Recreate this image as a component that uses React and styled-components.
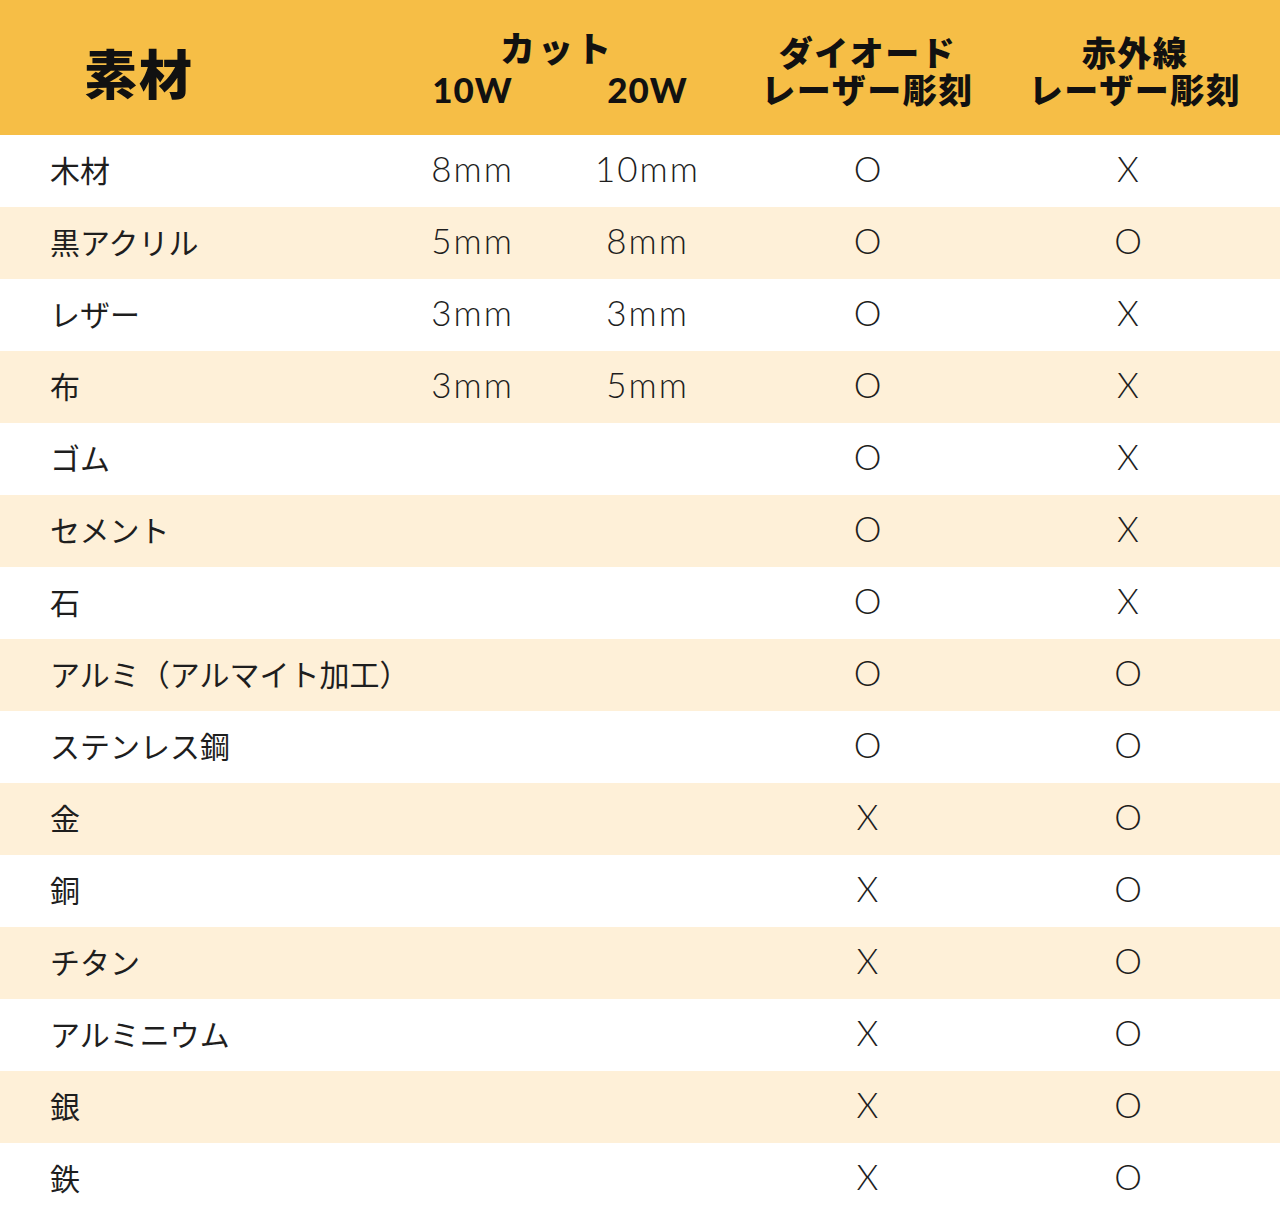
import React from 'react'
import styled, { createGlobalStyle } from 'styled-components'

const rows = [
  { name: '木材', w10: '8mm', w20: '10mm', diode: 'O', ir: 'X' },
  { name: '黒アクリル', w10: '5mm', w20: '8mm', diode: 'O', ir: 'O' },
  { name: 'レザー', w10: '3mm', w20: '3mm', diode: 'O', ir: 'X' },
  { name: '布', w10: '3mm', w20: '5mm', diode: 'O', ir: 'X' },
  { name: 'ゴム', diode: 'O', ir: 'X' },
  { name: 'セメント', diode: 'O', ir: 'X' },
  { name: '石', diode: 'O', ir: 'X' },
  { name: 'アルミ（アルマイト加工）', diode: 'O', ir: 'O' },
  { name: 'ステンレス鋼', diode: 'O', ir: 'O' },
  { name: '金', diode: 'X', ir: 'O' },
  { name: '銅', diode: 'X', ir: 'O' },
  { name: 'チタン', diode: 'X', ir: 'O' },
  { name: 'アルミニウム', diode: 'X', ir: 'O' },
  { name: '銀', diode: 'X', ir: 'O' },
  { name: '鉄', diode: 'X', ir: 'O' }
]

export default function App () {
  return (
    <>
      <GlobalStyle />
      <Table>
        <Header>
          <MaterialHead>素材</MaterialHead>
          <CutHead>
            <CutTitle>カット</CutTitle>
            <Watts>
              <Watt>10W</Watt>
              <Watt>20W</Watt>
            </Watts>
          </CutHead>
          <EngraveHead>ダイオード<br />レーザー彫刻</EngraveHead>
          <EngraveHead $shift={7}>赤外線<br />レーザー彫刻</EngraveHead>
        </Header>
        {rows.map((row, i) => (
          <Row key={row.name} $alt={i % 2 === 1}>
            <Name>{row.name}</Name>
            <Value>{row.w10}</Value>
            <Value>{row.w20}</Value>
            <Mark>{row.diode}</Mark>
            <Mark>{row.ir}</Mark>
          </Row>
        ))}
      </Table>
    </>
  )
}

const GlobalStyle = createGlobalStyle`
  body {
    margin: 0;
    background: #fff;
    font-family: "Noto Sans CJK JP", sans-serif;
    color: #1a1a1a;
  }
`

const columns = '385px 175px 175px 265px 256px'

const Table = styled.div`
  width: 1280px;
`

const Header = styled.div`
  display: grid;
  grid-template-columns: 385px 350px 265px 256px;
  height: 135px;
  background: #f6be46;
  color: #111;
  align-items: center;
`

const MaterialHead = styled.div`
  padding-left: 84px;
  padding-top: 8px;
  font-size: 53px;
  font-weight: 900;
  letter-spacing: 2px;
`

const CutHead = styled.div`
  display: flex;
  flex-direction: column;
  align-items: center;
  padding-top: 2px;
`

const CutTitle = styled.div`
  font-size: 35px;
  font-weight: 900;
  line-height: 40px;
  letter-spacing: 3px;
  margin-left: -6px;
`

const Watts = styled.div`
  display: grid;
  grid-template-columns: 175px 175px;
  width: 350px;
`

const Watt = styled.div`
  text-align: center;
  font-family: "Lato", "Liberation Sans", sans-serif;
  font-size: 35px;
  font-weight: 900;
  line-height: 44px;
  letter-spacing: 1px;
`

const EngraveHead = styled.div`
  text-align: center;
  font-size: 34px;
  font-weight: 900;
  line-height: 37px;
  letter-spacing: 1.5px;
  padding-top: 4px;
  margin-left: ${({ $shift = 0 }) => $shift * 2}px;
`

const Row = styled.div`
  display: grid;
  grid-template-columns: ${columns};
  height: 72px;
  align-items: center;
  background: ${({ $alt }) => ($alt ? '#fef0d8' : '#fff')};
`

const Name = styled.div`
  padding-left: 50px;
  padding-bottom: 4px;
  font-size: 30px;
  white-space: nowrap;
  color: #1e1e1e;
`

const Value = styled.div`
  text-align: center;
  padding-bottom: 6px;
  font-family: "Lato", "Liberation Sans", sans-serif;
  font-size: 35px;
  font-weight: 300;
  letter-spacing: 2px;
  color: #1e1e1e;
`

const Mark = styled(Value)`
  letter-spacing: 0;
`
